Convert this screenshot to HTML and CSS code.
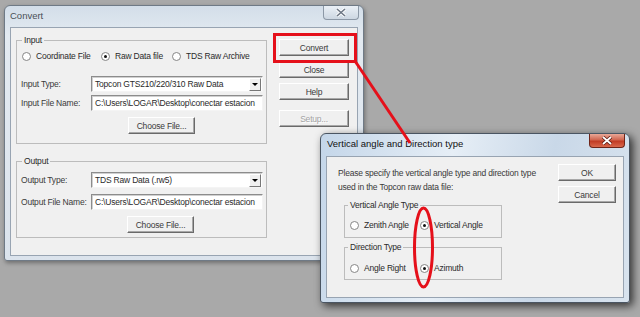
FILE: index.html
```html
<!DOCTYPE html>
<html lang="en">
<head>
<meta charset="UTF-8">
<title>Convert</title>
<link rel="stylesheet" href="styles.css">
</head>
<body>

<div class="win win-main">
    <div class="titlebar">
        <span class="title">Convert</span>
        <span class="close">
            <svg width="12" height="9" viewBox="0 0 12 9"><path d="M2 1 L10 8 M10 1 L2 8" stroke="#fff" stroke-width="3"/><path d="M2 1 L10 8 M10 1 L2 8" stroke="#6c7684" stroke-width="1.6"/></svg>
        </span>
    </div>
    <div class="client main-client">
        <div class="groups">
            <fieldset class="group">
                <legend>Input</legend>
                <div class="radio-row">
                    <span class="opt opt-w1"><span class="radio"></span>Coordinate File</span>
                    <span class="opt opt-w2"><span class="radio on"></span>Raw Data file</span>
                    <span class="opt"><span class="radio"></span>TDS Raw Archive</span>
                </div>
                <div class="field-row row-first">
                    <span class="lbl">Input Type:</span>
                    <div class="combo"><span class="val">Topcon GTS210/220/310 Raw Data</span><span class="drop"></span></div>
                </div>
                <div class="field-row row-tight">
                    <span class="lbl">Input File Name:</span>
                    <div class="edit"><span class="val">C:\Users\LOGAR\Desktop\conectar estacion</span></div>
                </div>
                <div class="btn-row">
                    <button class="btn btn-file">Choose File...</button>
                </div>
            </fieldset>

            <fieldset class="group group-out">
                <legend>Output</legend>
                <div class="field-row row-out">
                    <span class="lbl">Output Type:</span>
                    <div class="combo"><span class="val">TDS Raw Data (.rw5)</span><span class="drop"></span></div>
                </div>
                <div class="field-row row-out">
                    <span class="lbl">Output File Name:</span>
                    <div class="edit"><span class="val">C:\Users\LOGAR\Desktop\conectar estacion</span></div>
                </div>
                <div class="btn-row btn-row-out">
                    <button class="btn btn-file">Choose File...</button>
                </div>
            </fieldset>
        </div>

        <div class="side">
            <button class="btn btn-side">Convert</button>
            <button class="btn btn-side">Close</button>
            <button class="btn btn-side">Help</button>
            <button class="btn btn-side btn-off">Setup...</button>
        </div>
    </div>
</div>

<div class="win win-dlg">
    <div class="titlebar titlebar-dlg">
        <span class="title title-dlg">Vertical angle and Direction type</span>
        <span class="close close-red">
            <svg width="12" height="9" viewBox="0 0 12 9"><path d="M2 1 L10 8 M10 1 L2 8" stroke="#5a1a12" stroke-width="3.4"/><path d="M2 1 L10 8 M10 1 L2 8" stroke="#fff" stroke-width="1.8"/></svg>
        </span>
    </div>
    <div class="client dlg-client">
        <div class="dlg-left">
            <p class="note">Please specify the vertical angle type and direction type<br>used in the Topcon raw data file:</p>
            <fieldset class="group group-dlg">
                <legend>Vertical Angle Type</legend>
                <div class="radio-row dlg-row">
                    <span class="opt opt-w3"><span class="radio"></span>Zenith Angle</span>
                    <span class="opt"><span class="radio on"></span>Vertical Angle</span>
                </div>
            </fieldset>
            <fieldset class="group group-dlg group-dir">
                <legend>Direction Type</legend>
                <div class="radio-row dlg-row dir-row">
                    <span class="opt opt-w3"><span class="radio"></span>Angle Right</span>
                    <span class="opt"><span class="radio on"></span>Azimuth</span>
                </div>
            </fieldset>
        </div>
        <div class="dlg-buttons">
            <button class="btn btn-dlg">OK</button>
            <button class="btn btn-dlg">Cancel</button>
        </div>
    </div>
</div>

<!-- red marks drawn over the screenshot -->
<svg class="marks" width="640" height="317" viewBox="0 0 640 317">
    <rect x="274.5" y="34.5" width="81" height="27" fill="none" stroke="#e5101a" stroke-width="3"/>
    <line x1="355" y1="61" x2="410" y2="143" stroke="#e5101a" stroke-width="3"/>
    <ellipse cx="423.5" cy="247.5" rx="9" ry="39.5" fill="none" stroke="#e5101a" stroke-width="3"/>
</svg>

</body>
</html>
```

FILE: styles.css
```css
* {
    box-sizing: border-box;
}

body {
    margin: 0;
    width: 640px;
    height: 317px;
    background-color: #a9a9a9;
    position: relative;
    overflow: hidden;
    font-family: "Liberation Sans", Arial, sans-serif;
    font-size: 8.5px;
    letter-spacing: -0.2px;
    color: #2a2a2a;
}

/* windows */
.win {
    position: absolute;
    display: flex;
    flex-direction: column;
    border: 1px solid #6f7a86;
    border-radius: 6px 6px 3px 3px;
}

.win-main {
    left: 4px;
    top: 5px;
    width: 360px;
    height: 256px;
    padding: 0 5px 4px;
    background: linear-gradient(#d3dee9, #e3eaf1 30px, #dbe3ec);
    box-shadow: 1px 2px 4px rgba(0, 0, 0, 0.35);
}

.win-dlg {
    left: 320px;
    top: 133px;
    width: 310px;
    height: 170px;
    padding: 0 5px 4px;
    background: linear-gradient(100deg, #c4d6e9, #e6eef6 40%, #c9d8e8 70%, #d8e3ee);
    border-color: #4a5562;
    box-shadow: 3px 3px 9px rgba(0, 0, 0, 0.7);
}

.titlebar {
    height: 21px;
    display: flex;
    justify-content: space-between;
    align-items: flex-start;
}

.titlebar-dlg {
    height: 22px;
}

.title {
    font-size: 9.5px;
    line-height: 11px;
    letter-spacing: 0;
    padding-top: 4px;
    color: #4a4f56;
}

.title-dlg {
    line-height: 12px;
    padding-left: 1px;
    color: #111;
}

.close {
    width: 36px;
    height: 14px;
    margin-right: -1px;
    border: 1px solid #8c98a6;
    border-top: none;
    border-radius: 0 0 4px 4px;
    background: linear-gradient(#eaf0f6, #cdd7e2);
    display: flex;
    align-items: center;
    justify-content: center;
}

.close-red {
    border-color: #6e2418;
    background: linear-gradient(#e9a898, #d0654f 45%, #c13b24 55%, #d9684c);
}

.client {
    flex: 1;
    background-color: #f0f0f0;
    border: 1px solid #98a4b2;
}

/* main dialog */
.main-client {
    display: flex;
    align-items: flex-start;
}

.groups {
    margin-top: 7px;
    margin-left: 5px;
}

.group {
    margin: 0;
    padding: 0 3px 9px 0;
    width: 251px;
    min-width: 0;
    border: 1px solid #bcbcbc;
}

.group legend {
    margin-left: 5px;
    padding: 0 2px;
    line-height: 10px;
}

.group-out {
    margin-top: 12px;
    padding-bottom: 4px;
}

.radio-row {
    display: flex;
    align-items: center;
    height: 12px;
    margin-top: 5px;
    padding-left: 5px;
}

.opt {
    display: flex;
    align-items: center;
    white-space: nowrap;
}

.opt-w1 {
    width: 79px;
}

.opt-w2 {
    width: 71px;
}

.opt-w3 {
    width: 70px;
}

.radio {
    width: 9px;
    height: 9px;
    margin-right: 5px;
    border: 1px solid #868686;
    border-radius: 50%;
    background: #fff;
    display: flex;
    align-items: center;
    justify-content: center;
}

.radio.on::after {
    content: "";
    width: 3px;
    height: 3px;
    border-radius: 50%;
    background: #111;
}

.field-row {
    display: flex;
    align-items: center;
    height: 16px;
    padding-left: 4px;
}

.row-first {
    margin-top: 14px;
}

.row-tight {
    margin-top: 3px;
}

.row-out {
    margin-top: 6px;
}

.lbl {
    width: 70px;
    white-space: nowrap;
    color: #3a3a3a;
}

.combo,
.edit {
    width: 172px;
    height: 16px;
    display: flex;
    align-items: center;
    background: #fff;
    border: 1px solid;
    border-color: #8c8c8c #f4f4f4 #f4f4f4 #8c8c8c;
    box-shadow: inset 1px 1px 0 #d0d0d0;
    overflow: hidden;
}

.val {
    flex: 1;
    padding-left: 3px;
    white-space: nowrap;
    overflow: hidden;
}

.drop {
    width: 12px;
    height: 13px;
    margin-right: 1px;
    background: #f0f0f0;
    border: 1px solid;
    border-color: #fff #777 #777 #fff;
    display: flex;
    align-items: center;
    justify-content: center;
}

.drop::after {
    content: "";
    border-left: 3px solid transparent;
    border-right: 3px solid transparent;
    border-top: 3px solid #000;
}

.btn-row {
    margin-top: 6px;
    padding-left: 111px;
}

.btn-row-out {
    padding-left: 110px;
}

.btn {
    display: flex;
    align-items: center;
    justify-content: center;
    height: 17px;
    padding: 0;
    font-family: inherit;
    font-size: 8.5px;
    letter-spacing: -0.2px;
    color: #3a3a3a;
    background: #f0f0f0;
    border: 1px solid;
    border-color: #fff #6a6a6a #6a6a6a #fff;
    box-shadow: inset -1px -1px 0 #a8a8a8;
}

.btn-file {
    width: 67px;
}

.side {
    display: flex;
    flex-direction: column;
    gap: 5px;
    margin-top: 11px;
    margin-left: 12px;
}

.btn-side {
    width: 70px;
}

.btn-off {
    margin-top: 5px;
    color: #a3a3a3;
    text-shadow: 1px 1px 0 #fff;
}

/* angle dialog */
.dlg-client {
    display: flex;
    align-items: flex-start;
}

.dlg-left {
    padding-top: 9px;
    padding-left: 11px;
}

.note {
    margin: 0;
    line-height: 14px;
    white-space: nowrap;
    color: #3a3a3a;
}

.group-dlg {
    width: 158px;
    margin-top: 6px;
    margin-left: 6px;
    padding-bottom: 6px;
}

.group-dlg legend {
    margin-left: 3px;
}

.group-dir {
    margin-top: 4px;
    padding-bottom: 5px;
}

.dlg-row {
    margin-top: 9px;
}

.dir-row {
    margin-top: 10px;
}

.dlg-buttons {
    display: flex;
    flex-direction: column;
    gap: 5px;
    margin-left: auto;
    padding-top: 7px;
    padding-right: 7px;
}

.btn-dlg {
    width: 58px;
}

.marks {
    position: absolute;
    left: 0;
    top: 0;
    pointer-events: none;
}
```
